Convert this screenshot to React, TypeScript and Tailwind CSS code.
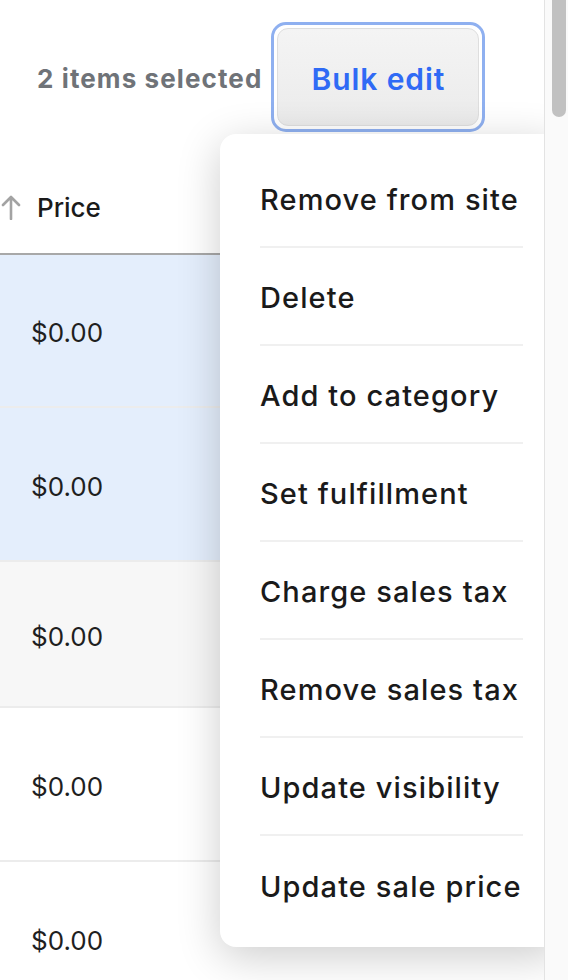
import React from 'react';

const menuItems = [
  'Remove from site',
  'Delete',
  'Add to category',
  'Set fulfillment',
  'Charge sales tax',
  'Remove sales tax',
  'Update visibility',
  'Update sale price',
];

const rows = [
  { bg: 'bg-[#e4eefc]', h: 'h-[153px]' },
  { bg: 'bg-[#e4eefc]', h: 'h-[154px]' },
  { bg: 'bg-[#f7f7f7]', h: 'h-[146px]' },
  { bg: 'bg-white', h: 'h-[154px]' },
  { bg: 'bg-white', h: 'h-[154px]' },
];

export default function App() {
  return (
    <div className="flex h-[980px] w-[568px] overflow-hidden bg-white font-['Inter','Liberation_Sans',sans-serif]">
      <div className="relative flex-1 overflow-hidden">
        {/* toolbar */}
        <div className="flex h-[133px] items-center pl-[37px] pt-[20px]">
          <span className="pt-[4px] text-[26px] font-bold tracking-[1.1px] text-[#6f7378]">2 items selected</span>
          <div className="ml-[9px] rounded-[15px] border-[3px] border-[#8fb0f0] p-[3px]">
            <button className="flex h-[98px] w-[202px] items-center justify-center rounded-[11px] border border-[#dedede] bg-gradient-to-b from-[#f4f4f4] to-[#ebebeb] pt-[6px] text-[30px] font-semibold tracking-[0.9px] text-[#2f6af5]">
              Bulk edit
            </button>
          </div>
        </div>

        {/* table header */}
        <div className="flex h-[122px] items-center gap-[16px] border-b-2 border-[#a8a8a8] pt-[28px]">
          <svg width="20" height="26" viewBox="0 0 20 26" className="ml-[1px]">
            <path d="M10 3v22M2 11l8-8 8 8" stroke="#a3a3a3" strokeWidth="2.6" fill="none" strokeLinecap="round" strokeLinejoin="round" />
          </svg>
          <span className="text-[26px] font-medium text-[#1a1a1a]">Price</span>
        </div>

        {/* rows */}
        {rows.map((r, i) => (
          <div key={i} className={`flex items-center border-b-2 border-[#ececec] pl-[31px] pt-[4px] ${r.bg} ${r.h}`}>
            <span className="text-[26px] text-[#1f1f1f]">$0.00</span>
          </div>
        ))}

        {/* dropdown menu */}
        <div className="absolute left-[220px] top-[134px] w-[343px] rounded-[16px] bg-white px-[40px] pb-[13px] pt-[16px] shadow-[0_10px_44px_rgba(0,0,0,0.2)]">
          {menuItems.map((item, i) => (
            <div
              key={item}
              className={`flex h-[98px] items-center whitespace-nowrap pt-[4px] text-[29px] font-medium tracking-[1.1px] text-[#1a1a1a] ${
                i < menuItems.length - 1 ? 'border-b-2 border-[#f0f0f0]' : ''
              }`}
            >
              {item}
            </div>
          ))}
        </div>
      </div>

      {/* scrollbar */}
      <div className="w-[24px] shrink-0 border-l border-[#e3e3e3] bg-[#fafafa] pl-[7px] pr-[2px]">
        <div className="h-[117px] rounded-b-[8px] bg-[#c1c1c1]" />
      </div>
    </div>
  );
}
